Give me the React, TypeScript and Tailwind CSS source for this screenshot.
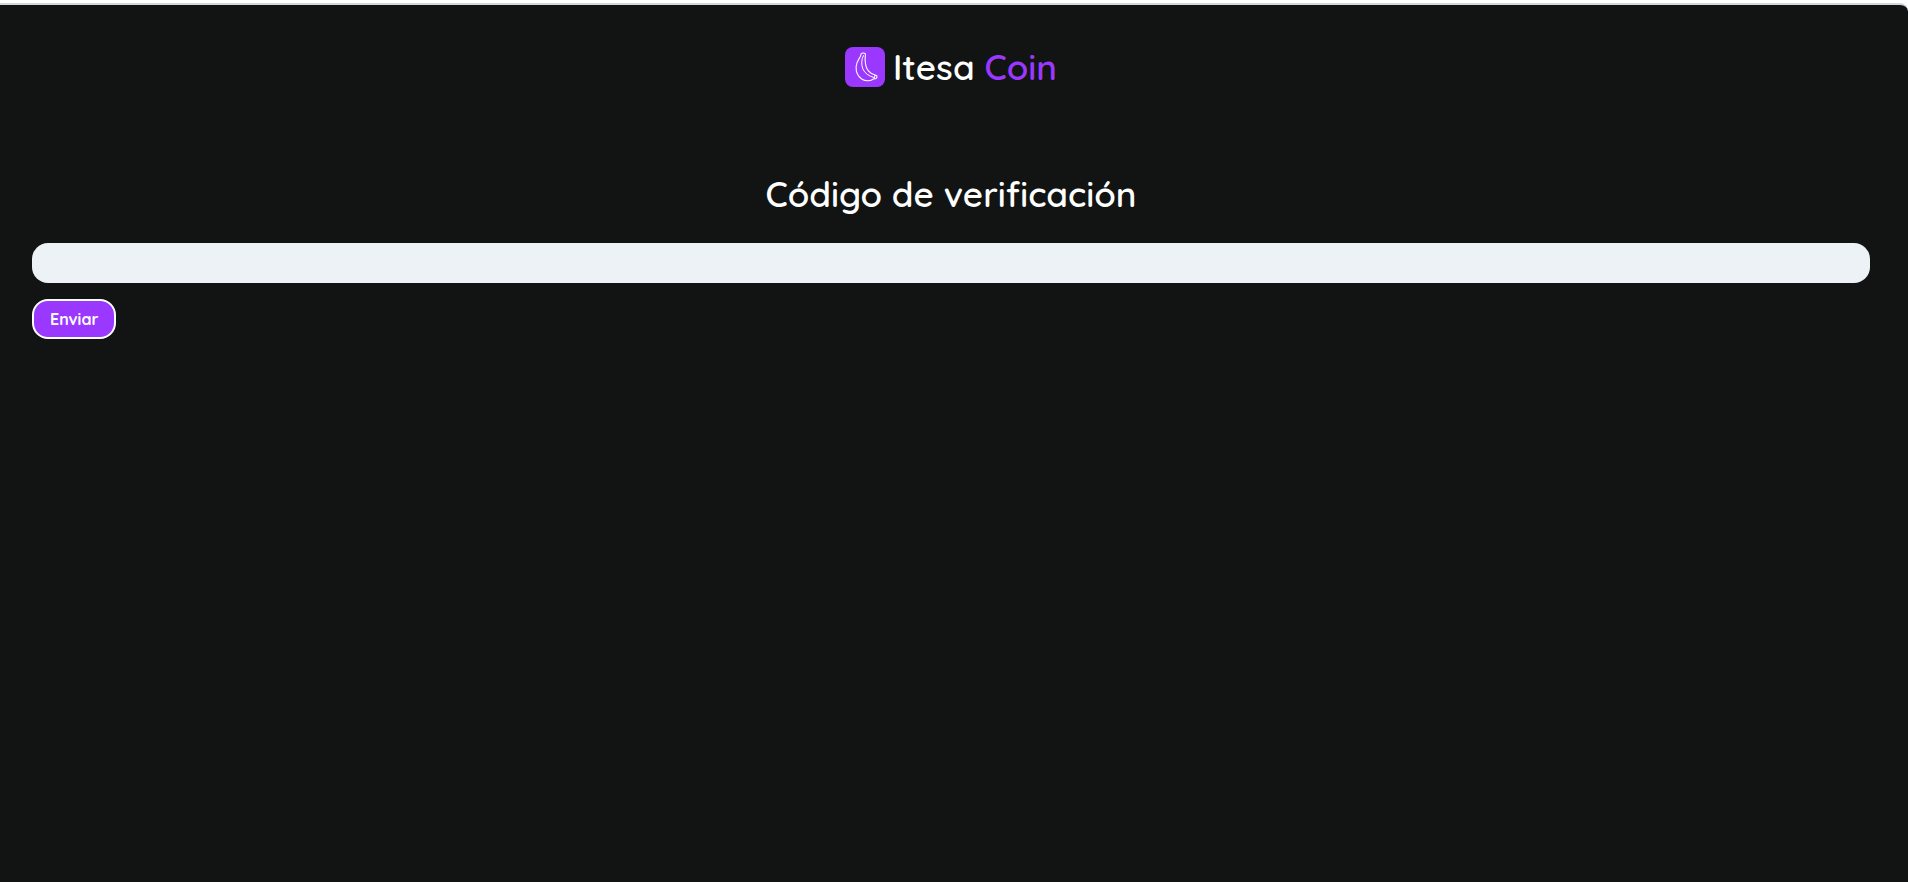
import { useState } from "react";

function BananaLogo() {
  return (
    <svg
      viewBox="0 0 40 40"
      className="size-10 shrink-0 rounded-lg bg-[#9b38ff]"
      fill="none"
      stroke="white"
      strokeLinecap="round"
      strokeLinejoin="round"
      aria-hidden="true"
    >
      <path
        strokeWidth="1.1"
        d="M16.2 6.8C17.2 5.8 19.4 5.7 20.2 6.7C20.9 8 20 9.8 20.1 12.2C20.2 17 20.8 21 23.6 24.2C25.4 26.2 27.6 27.5 30 28L31.8 28.8C32.2 29.8 31.8 31 31.1 31.5C29.8 31.9 28.4 31.7 27.6 32.5C25 34.4 20.2 34.2 17 32.2C12.6 29.4 10.9 24.6 11.1 19.8C11.3 15 13.6 12.4 15.2 9.8C15.7 8.8 15.8 7.7 16.2 6.8Z"
      />
      <path
        strokeWidth="1"
        d="M18.4 8.6C16.4 12 16.2 17.6 17.8 21.8C19.6 26.2 24 29.2 28.6 30.4M30 28.2L29.4 31.4"
      />
    </svg>
  );
}

export default function App() {
  const [code, setCode] = useState("");

  return (
    <div className="min-h-screen bg-white pt-[3px] font-['Quicksand','Lato',sans-serif]">
      <div className="flex min-h-[calc(100vh-3px)] flex-col rounded-tr-lg border-t-2 border-[#d0d7e1] bg-[#111413] pr-[38px] pl-8 text-white">
        <header className="flex justify-center pt-[42px]">
          <a href="/" className="flex h-10 items-center gap-2">
            <BananaLogo />
            <span className="text-[35px] leading-10 font-semibold">
              Itesa <span className="text-[#9b38ff]">Coin</span>
            </span>
          </a>
        </header>
        <main className="pt-[86px]">
          <form onSubmit={(event) => event.preventDefault()}>
            <h1 className="text-center text-[35px] leading-[42px] font-semibold">
              <label htmlFor="code">Código de verificación</label>
            </h1>
            <input
              id="code"
              type="text"
              value={code}
              onChange={(event) => setCode(event.target.value)}
              className="mt-7 block h-10 w-full rounded-2xl bg-[#edf2f7] px-4 text-base text-[#111413] outline-none"
            />
            <button
              type="submit"
              className="mt-4 flex h-10 items-center justify-center rounded-2xl border-2 border-white bg-[#9b38ff] px-4 text-base font-bold"
            >
              Enviar
            </button>
          </form>
        </main>
      </div>
    </div>
  );
}
